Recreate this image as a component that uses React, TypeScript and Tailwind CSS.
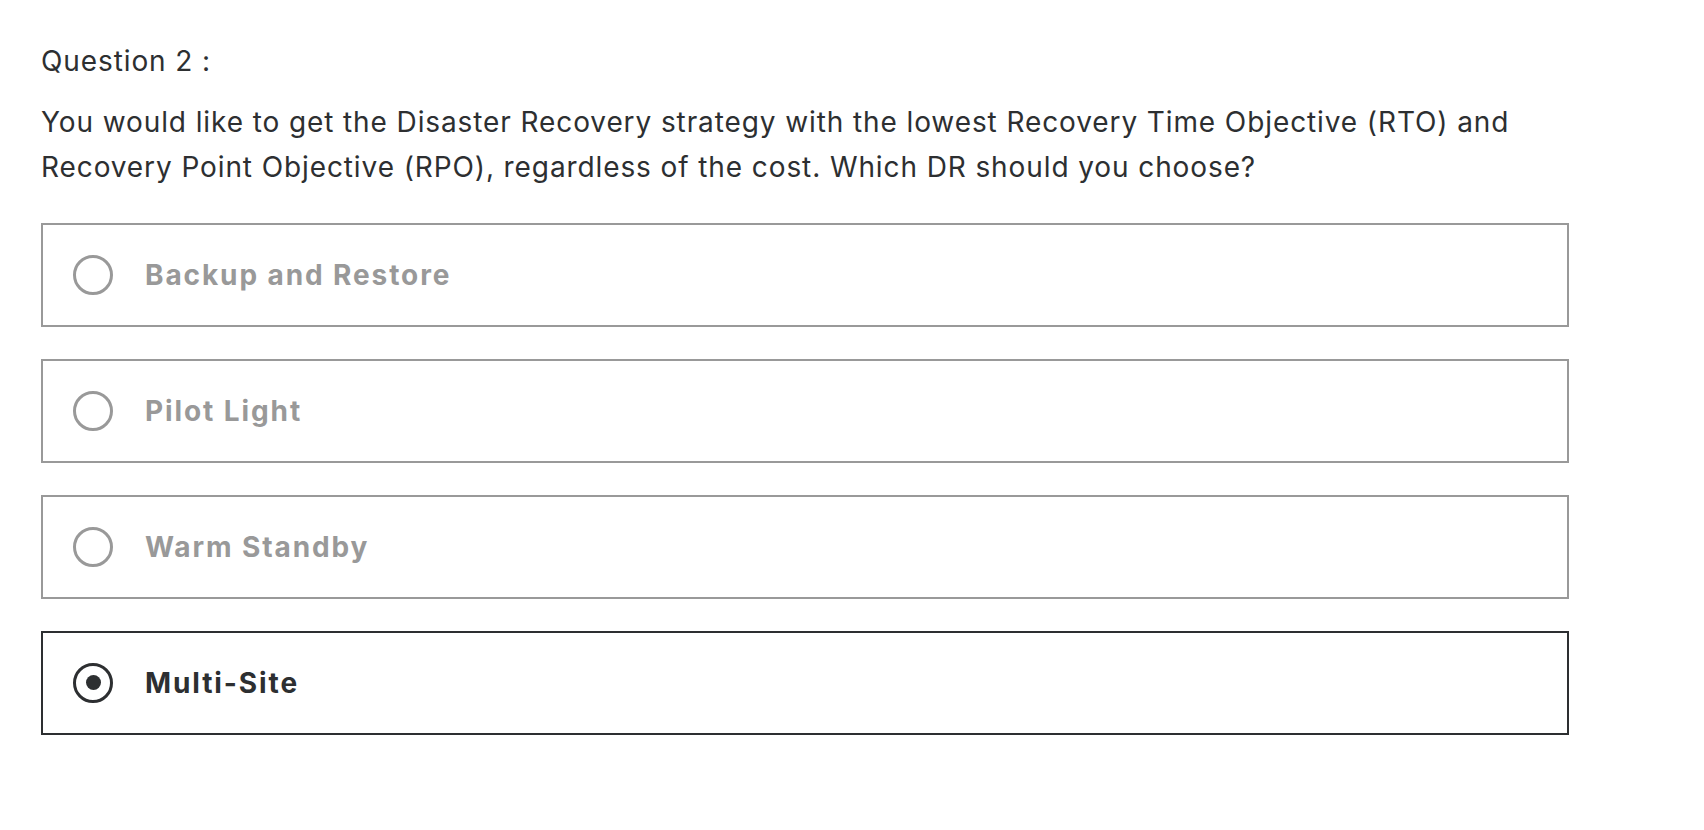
import { useState } from 'react';

const options = ['Backup and Restore', 'Pilot Light', 'Warm Standby', 'Multi-Site'];

function Radio({ checked }: { checked: boolean }) {
  return (
    <span
      className={`flex h-[40px] w-[40px] shrink-0 items-center justify-center rounded-full border-[3px] ${
        checked ? 'border-[#2d2f31]' : 'border-[#999999]'
      }`}
    >
      {checked && <span className="h-[15px] w-[15px] rounded-full bg-[#2d2f31]" />}
    </span>
  );
}

export default function App() {
  const [selected, setSelected] = useState(3);

  return (
    <div className="min-h-screen bg-white pl-[41px] pt-[39px] font-['Inter',sans-serif] text-[#2d2f31]">
      <div className="w-[1528px]">
        <p className="text-[28px] leading-[45.5px] tracking-[0.9px]">Question 2 :</p>
        <p className="mt-[15px] text-[28px] leading-[45.5px] tracking-[0.9px]">
          You would like to get the Disaster Recovery strategy with the lowest Recovery Time Objective (RTO) and
          Recovery Point Objective (RPO), regardless of the cost. Which DR should you choose?
        </p>

        <div className="mt-[32px] flex flex-col gap-[32px]">
          {options.map((opt, i) => {
            const checked = selected === i;
            return (
              <button
                key={opt}
                onClick={() => setSelected(i)}
                className={`flex h-[104px] items-center gap-[32px] border-2 bg-white pl-[30px] text-left ${
                  checked ? 'border-[#2d2f31]' : 'border-[#999999]'
                }`}
              >
                <Radio checked={checked} />
                <span
                  className={`text-[28px] font-bold tracking-[1.9px] ${
                    checked ? 'text-[#2d2f31]' : 'text-[#999999]'
                  }`}
                >
                  {opt}
                </span>
              </button>
            );
          })}
        </div>
      </div>
    </div>
  );
}
